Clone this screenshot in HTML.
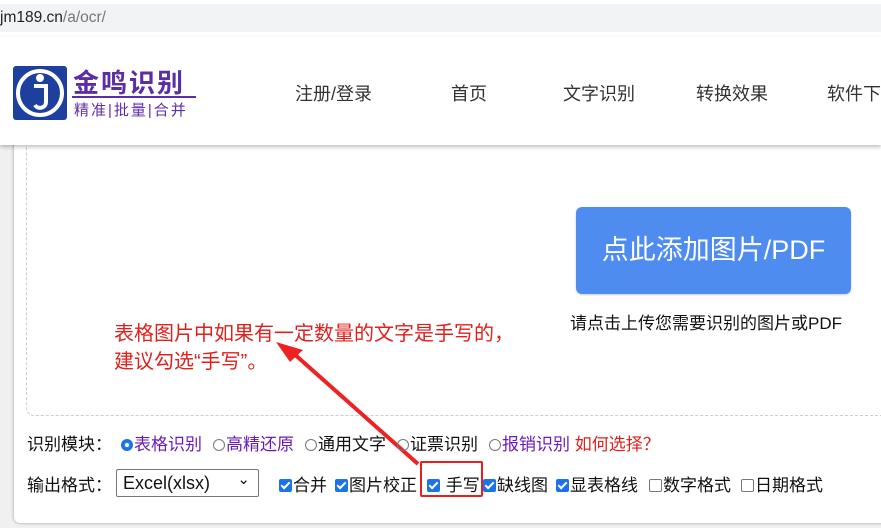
<!DOCTYPE html>
<html><head><meta charset="utf-8"><style>
*{margin:0;padding:0;box-sizing:border-box}
body{width:881px;height:528px;overflow:hidden;background:#f0f0f0;font-family:"Liberation Sans","Noto Sans CJK SC",sans-serif;position:relative}
.url{position:absolute;left:0;top:0;width:881px;height:37px;background:#fff}
.url .bar{position:absolute;left:0;top:4px;width:881px;height:28px;background:#f1f3f4;font-size:15.5px;line-height:28px;color:#222}
.url .bar span{color:#777}
.card{position:absolute;left:14px;top:130px;width:880px;height:393px;background:#fff;border-radius:6px;box-shadow:0 0 3px rgba(0,0,0,.35)}
.hdr{position:absolute;left:0;top:37px;width:881px;height:108px;background:#fff;box-shadow:0 2px 4px rgba(0,0,0,.25)}
.nav{position:absolute;font-size:18px;color:#333;white-space:nowrap}
.dash{position:absolute;left:26px;top:140px;width:880px;height:276px;border:1px dashed #ccc;border-top:none;border-radius:0 0 0 8px}
.btn{position:absolute;left:576px;top:207px;width:275px;height:87px;background:#4f8cf0;border-radius:6px;color:#fff;font-size:27px;line-height:87px;text-align:center;box-shadow:0 1px 2px rgba(0,0,0,.2)}
.tip{position:absolute;left:570px;top:309px;font-size:17px;color:#111;white-space:nowrap}
.red{position:absolute;left:114px;font-size:20px;color:#e0201c;white-space:nowrap}
.it{position:absolute;font-size:17px;color:#111;white-space:nowrap}
.p{color:#6a1bb8}
.rb{display:inline-block;width:12px;height:12px;border:1px solid #777;border-radius:50%;vertical-align:-1px;margin-right:1px}
.rb.on{border:3px solid #1a73e8;background:#fff;box-shadow:0 0 0 1px #1a73e8 inset}
.cb{display:inline-block;width:13px;height:13px;border-radius:2px;background:#1a73e8;vertical-align:-1px;position:relative;margin-right:1px}
.cb:after{content:"";position:absolute;left:4px;top:1px;width:3px;height:7px;border:solid #fff;border-width:0 2px 2px 0;transform:rotate(45deg)}
.cb.off{background:#fff;border:1px solid #777}
.cb.off:after{display:none}
.sel{position:absolute;left:116px;top:469px;width:143px;height:28px;border:1px solid #777;border-radius:2px;font-size:18px;line-height:26px;padding-left:6px;color:#111}
</style></head><body>
<div class="card"></div>
<div class="dash"></div>
<div class="url"><div class="bar">jm189.cn<span>/a/ocr/</span></div></div>
<div class="hdr">
 <svg style="position:absolute;left:13px;top:29px" width="54" height="54" viewBox="0 0 54 54"><rect width="54" height="54" rx="3" fill="#1d3f9e"/><circle cx="27" cy="27" r="22" fill="none" stroke="#fff" stroke-width="4"/><circle cx="27" cy="12" r="4" fill="#fff"/><path d="M21 20h12v16c0 6-8 8-11 3" fill="none" stroke="#fff" stroke-width="4"/></svg>
 <div style="position:absolute;left:73px;top:26px;font-size:26px;font-weight:bold;color:#5b2ea6;letter-spacing:2px">金鸣识别</div>
 <div style="position:absolute;left:72px;top:59px;width:124px;height:2px;background:#5b2ea6"></div>
 <div style="position:absolute;left:74px;top:62px;font-size:15px;color:#5b2ea6;letter-spacing:2px">精准|批量|合并</div>
 <div class="nav" style="left:295px;top:43px">注册/登录</div>
 <div class="nav" style="left:451px;top:43px">首页</div>
 <div class="nav" style="left:563px;top:43px">文字识别</div>
 <div class="nav" style="left:696px;top:43px">转换效果</div>
 <div class="nav" style="left:827px;top:43px">软件下载</div>
</div>
<div class="btn">点此添加图片/PDF</div>
<div class="tip">请点击上传您需要识别的图片或PDF</div>
<div class="red" style="top:317px">表格图片中如果有一定数量的文字是手写的，</div>
<div class="red" style="top:345px">建议勾选“手写”。</div>
<svg style="position:absolute;left:0;top:0" width="881" height="528"><path d="M418 464 L292 352" stroke="#ee2222" stroke-width="4"/><path d="M276 342 L303 350 L290 362 Z" fill="#ee2222"/></svg>
<div class="it" style="left:27px;top:430px">识别模块：</div>
<div class="it" style="left:121px;top:430px"><span class="rb on"></span><span class="p">表格识别</span></div>
<div class="it" style="left:213px;top:430px"><span class="rb"></span><span class="p">高精还原</span></div>
<div class="it" style="left:305px;top:430px"><span class="rb"></span>通用文字</div>
<div class="it" style="left:397px;top:430px"><span class="rb"></span>证票识别</div>
<div class="it" style="left:489px;top:430px"><span class="rb"></span><span class="p">报销识别</span> <span style="color:#e0201c">如何选择？</span></div>
<div class="it" style="left:27px;top:471px">输出格式：</div>
<div class="sel">Excel(xlsx)<span style="position:absolute;right:8px;top:-3px;font-size:15px">⌄</span></div>
<div class="it" style="left:279px;top:471px"><span class="cb"></span>合并</div>
<div class="it" style="left:335px;top:471px"><span class="cb"></span>图片校正</div>
<div class="it" style="left:427px;top:471px"><span class="cb"></span> 手写</div>
<div class="it" style="left:483px;top:471px"><span class="cb"></span>缺线图</div>
<div class="it" style="left:556px;top:471px"><span class="cb"></span>显表格线</div>
<div class="it" style="left:649px;top:471px"><span class="cb off"></span>数字格式</div>
<div class="it" style="left:741px;top:471px"><span class="cb off"></span>日期格式</div>
<div style="position:absolute;left:420px;top:461px;width:63px;height:36px;border:2px solid #e52020;border-radius:2px"></div>
</body></html>
